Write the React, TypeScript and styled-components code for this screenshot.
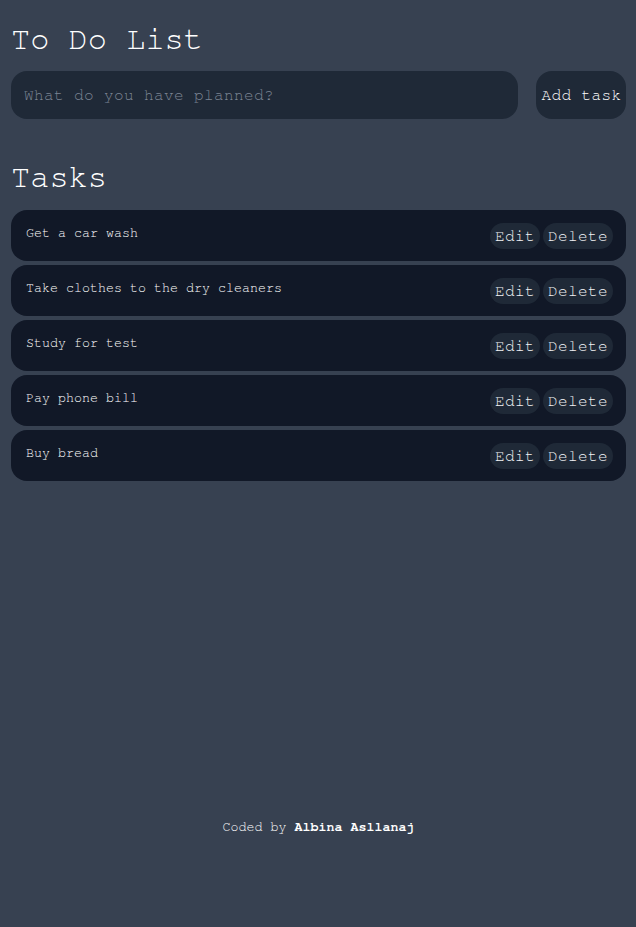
import React from "react";
import styled, { createGlobalStyle } from "styled-components";

const MONO = `FreeMono, "Liberation Mono", "Courier New", monospace`;

const GlobalStyle = createGlobalStyle`
  html, body {
    margin: 0;
    padding: 0;
    background: #374151;
  }
  body {
    font-family: ${MONO};
    color: #ffffff;
  }
  * { box-sizing: border-box; }
`;

const Page = styled.div`
  min-height: 100vh;
  display: flex;
  flex-direction: column;
  padding: 21px 10px 0 11px;
`;

const Title = styled.h1`
  margin: 0;
  font-size: 32px;
  font-weight: normal;
  line-height: 36px;
  color: #ffffff;
`;

const Form = styled.form`
  display: flex;
  gap: 18px;
  margin-top: 14px;
`;

const Input = styled.input`
  flex: 1;
  height: 48px;
  border: none;
  border-radius: 16px;
  background: #1f2937;
  padding: 0 13px;
  font-family: ${MONO};
  font-size: 16px;
  letter-spacing: 0.4px;
  color: #ffffff;
  outline: none;
  &::placeholder { color: #7c8594; }
`;

const AddButton = styled.button`
  height: 48px;
  width: 90px;
  border: none;
  border-radius: 16px;
  background: #1f2937;
  padding: 0 0 0 1px;
  font-family: ${MONO};
  font-size: 16px;
  letter-spacing: 0.4px;
  color: #ffffff;
`;

const Heading = styled.h2`
  margin: 40px 0 0;
  font-size: 32px;
  font-weight: normal;
  line-height: 36px;
  color: #ffffff;
`;

const List = styled.ul`
  list-style: none;
  margin: 15px 0 0;
  padding: 0;
  display: flex;
  flex-direction: column;
  gap: 4px;
`;

const Row = styled.li`
  height: 51px;
  border-radius: 16px;
  background: #111827;
  display: flex;
  align-items: center;
  justify-content: space-between;
  padding: 0 13px 0 15px;
`;

const TaskText = styled.span`
  align-self: flex-start;
  padding-top: 16px;
  font-size: 13.33px;
  line-height: 15px;
  color: #ffffff;
`;

const Actions = styled.div`
  display: flex;
  gap: 3px;
`;

const SmallButton = styled.button`
  height: 26px;
  padding: 0 5px;
  border: none;
  border-radius: 13px;
  background: #1f2937;
  font-family: ${MONO};
  font-size: 16px;
  letter-spacing: 0.4px;
  line-height: 18px;
  color: #f3f4f6;
`;

const Footer = styled.footer`
  margin-top: auto;
  padding-bottom: 92px;
  text-align: center;
  font-size: 13.33px;
  line-height: 15px;
  color: #ffffff;
`;

const Name = styled.strong`
  font-weight: bold;
  color: #ffffff;
`;

const tasks = [
  "Get a car wash",
  "Take clothes to the dry cleaners",
  "Study for test",
  "Pay phone bill",
  "Buy bread",
];

export default function App() {
  return (
    <>
      <GlobalStyle />
      <Page>
        <Title>To Do List</Title>
        <Form onSubmit={(e) => e.preventDefault()}>
          <Input placeholder="What do you have planned?" />
          <AddButton type="submit">Add task</AddButton>
        </Form>
        <Heading>Tasks</Heading>
        <List>
          {tasks.map((t) => (
            <Row key={t}>
              <TaskText>{t}</TaskText>
              <Actions>
                <SmallButton>Edit</SmallButton>
                <SmallButton>Delete</SmallButton>
              </Actions>
            </Row>
          ))}
        </List>
        <Footer>
          Coded by <Name>Albina Asllanaj</Name>
        </Footer>
      </Page>
    </>
  );
}
